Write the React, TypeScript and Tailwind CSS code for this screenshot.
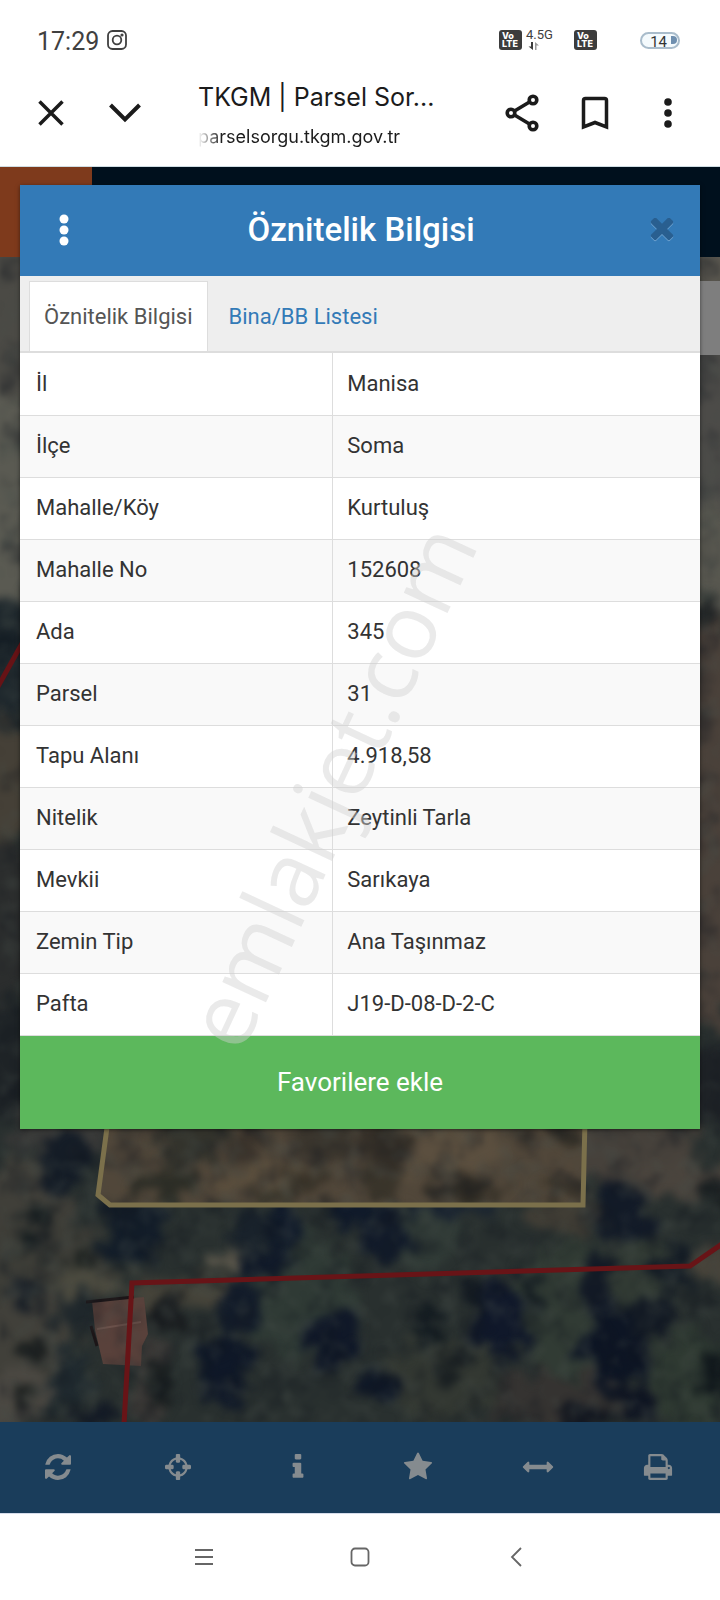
import { useState } from 'react';

const rows = [
    { label: 'İl', value: 'Manisa' },
    { label: 'İlçe', value: 'Soma' },
    { label: 'Mahalle/Köy', value: 'Kurtuluş' },
    { label: 'Mahalle No', value: '152608' },
    { label: 'Ada', value: '345' },
    { label: 'Parsel', value: '31' },
    { label: 'Tapu Alanı', value: '4.918,58' },
    { label: 'Nitelik', value: 'Zeytinli Tarla' },
    { label: 'Mevkii', value: 'Sarıkaya' },
    { label: 'Zemin Tip', value: 'Ana Taşınmaz' },
    { label: 'Pafta', value: 'J19-D-08-D-2-C' },
];

const tools = [
    { name: 'Yenile', box: '0 0 1536 1536', path: 'M1511 928q0 5-1 7-64 268-268 434.5t-478 166.5q-146 0-282.5-55t-243.5-157l-129 129q-19 19-45 19t-45-19-19-45v-448q0-26 19-45t45-19h448q26 0 45 19t19 45-19 45l-137 137q71 66 161 102t187 36q134 0 250-65t186-179q11-17 53-117 8-23 30-23h192q13 0 22.5 9.5t9.5 22.5zm25-800v448q0 26-19 45t-45 19h-448q-26 0-45-19t-19-45 19-45l138-138q-148-137-349-137-134 0-250 65t-186 179q-11 17-53 117-8 23-30 23h-199q-13 0-22.5-9.5t-9.5-22.5v-7q65-268 270-434.5t480-166.5q146 0 284 55.5t245 156.5l130-129q19-19 45-19t45 19 19 45z' },
    { name: 'Konum', box: '128 128 1536 1536', path: 'M1325 1024h-109q-26 0-45-19t-19-45v-128q0-26 19-45t45-19h109q-32-108-112.5-188.5t-188.5-112.5v109q0 26-19 45t-45 19h-128q-26 0-45-19t-19-45v-109q-108 32-188.5 112.5t-112.5 188.5h109q26 0 45 19t19 45v128q0 26-19 45t-45 19h-109q32 108 112.5 188.5t188.5 112.5v-109q0-26 19-45t45-19h128q26 0 45 19t19 45v109q108-32 188.5-112.5t112.5-188.5zm339-192v128q0 26-19 45t-45 19h-143q-37 161-154.5 278.5t-278.5 154.5v143q0 26-19 45t-45 19h-128q-26 0-45-19t-19-45v-143q-161-37-278.5-154.5t-154.5-278.5h-143q-26 0-45-19t-19-45v-128q0-26 19-45t45-19h143q37-161 154.5-278.5t278.5-154.5v-143q0-26 19-45t45-19h128q26 0 45 19t19 45v143q161 37 278.5 154.5t154.5 278.5h143q26 0 45 19t19 45z' },
    { name: 'Bilgi', box: '128 128 1536 1536', path: 'M1216 1344v128q0 26-19 45t-45 19h-512q-26 0-45-19t-19-45v-128q0-26 19-45t45-19h64v-384h-64q-26 0-45-19t-19-45v-128q0-26 19-45t45-19h384q26 0 45 19t19 45v576h64q26 0 45 19t19 45zm-128-1152v192q0 26-19 45t-45 19h-256q-26 0-45-19t-19-45v-192q0-26 19-45t45-19h256q26 0 45 19t19 45z' },
    { name: 'Favoriler', box: '128 128 1536 1536', path: 'M1728 647q0 22-26 48l-363 354 86 500q1 7 1 20 0 21-10.5 35.5t-30.5 14.5q-19 0-40-12l-449-236-449 236q-22 12-40 12-21 0-31.5-14.5t-10.5-35.5q0-6 2-20l86-500-364-354q-25-27-25-48 0-37 56-46l502-73 225-455q19-41 49-41t49 41l225 455 502 73q56 9 56 46z' },
    { name: 'Ölçüm', box: '128 128 1536 1536', path: 'M1792 896q0 26-19 45l-256 256q-19 19-45 19t-45-19-19-45v-128h-1024v128q0 26-19 45t-45 19-45-19l-256-256q-19-19-19-45t19-45l256-256q19-19 45-19t45 19 19 45v128h1024v-128q0-26 19-45t45-19 45 19l256 256q19 19 19 45z' },
    { name: 'Yazdır', box: '128 128 1536 1536', path: 'M448 1536h896v-256h-896v256zm0-640h896v-384h-160q-40 0-68-28t-28-68v-160h-640v640zm1152 64q0-26-19-45t-45-19-45 19-19 45 19 45 45 19 45-19 19-45zm128 0v416q0 13-9.5 22.5t-22.5 9.5h-224v160q0 40-28 68t-68 28h-960q-40 0-68-28t-28-68v-160h-224q-13 0-22.5-9.5t-9.5-22.5v-416q0-79 56.5-135.5t135.5-56.5h64v-544q0-40 28-68t68-28h672q40 0 88 20t76 48l152 152q28 28 48 76t20 88v256h64q79 0 135.5 56.5t56.5 135.5z' },
];

// [cx, cy, rx, ry, color]
type Blob = [number, number, number, number, string];

const ground: Blob[] = [
    [0, 340, 60, 120, '#4b4a45'],
    [0, 500, 60, 110, '#5a5a52'],
    [0, 660, 50, 60, '#1f282d'],
    [0, 780, 50, 60, '#454037'],
    [0, 920, 50, 80, '#2b2d2d'],
    [0, 1060, 50, 60, '#1f2427'],
    [715, 250, 60, 40, '#5a574f'],
    [715, 430, 60, 140, '#4c4b48'],
    [715, 560, 40, 50, '#595850'],
    [712, 820, 50, 210, '#4a413a'],
    [715, 1090, 40, 40, '#1e2226'],
    [60, 1130, 50, 30, '#383837'],
    [25, 1210, 50, 50, '#403f39'],
    [40, 1270, 70, 50, '#3d3d37'],
    [20, 1340, 55, 45, '#41403a'],
    [15, 1400, 40, 28, '#4b4842'],
    [90, 1285, 35, 14, '#4b4a3f'],
    [620, 1150, 80, 35, '#46413b'],
    [575, 1215, 45, 20, '#403d35'],
    [680, 1180, 50, 20, '#4a443d'],
    [715, 1265, 20, 20, '#47433a'],
    [225, 1262, 16, 14, '#5c584c'],
    [185, 1292, 55, 14, '#46443a'],
    [150, 1380, 16, 50, '#3e3b38'],
    [560, 1400, 90, 28, '#353331'],
    [440, 1380, 60, 40, '#333832'],
    [300, 1300, 60, 60, '#2f3a35'],
    [570, 1310, 60, 70, '#313b34'],
    [420, 1230, 40, 40, '#303a36'],
    [640, 1290, 30, 50, '#323b34'],
    [690, 1380, 40, 50, '#2f3a32'],
];

const trees: Blob[] = [
    [65, 1160, 24, 34, '#151d27'],
    [35, 1217, 14, 14, '#191f21'],
    [32, 1250, 14, 10, '#1c2323'],
    [78, 1256, 13, 16, '#1c211f'],
    [24, 1290, 18, 14, '#1b2128'],
    [34, 1352, 12, 14, '#1b1f1d'],
    [25, 1394, 12, 9, '#1c1f1e'],
    [75, 1310, 20, 20, '#20282c'],
    [135, 1230, 32, 36, '#131d29'],
    [70, 1380, 24, 24, '#202a2f'],
    [95, 1415, 24, 10, '#141b26'],
    [250, 1230, 22, 22, '#19222b'],
    [285, 1225, 16, 30, '#101a2a'],
    [265, 1262, 26, 14, '#111a29'],
    [350, 1205, 18, 22, '#101a2a'],
    [385, 1235, 24, 28, '#121b2a'],
    [170, 1315, 20, 16, '#171a1d'],
    [240, 1310, 22, 24, '#131c2a'],
    [225, 1370, 26, 36, '#0f1828'],
    [330, 1340, 28, 28, '#101828'],
    [160, 1385, 12, 22, '#1a1f20'],
    [430, 1325, 16, 20, '#11191f'],
    [500, 1320, 28, 38, '#10182a'],
    [380, 1385, 22, 14, '#0f1828'],
    [455, 1370, 20, 12, '#171d20'],
    [535, 1290, 10, 18, '#121a20'],
    [470, 1290, 12, 18, '#141b22'],
    [625, 1210, 30, 30, '#131b28'],
    [600, 1290, 14, 34, '#131a26'],
    [615, 1350, 34, 40, '#0d1524'],
    [650, 1315, 26, 20, '#131a24'],
    [632, 1400, 16, 18, '#0f1522'],
    [675, 1270, 18, 22, '#141c25'],
    [715, 1190, 16, 12, '#1a1f21'],
    [714, 1370, 10, 24, '#11181c'],
    [450, 1200, 50, 16, '#1a2430'],
    [590, 1417, 30, 8, '#11151f'],
    [2, 645, 16, 14, '#141d24'],
    [704, 618, 10, 9, '#222425'],
];

const fieldTrees: Blob[] = [
    [165, 1182, 32, 18, '#2c2d26'],
    [190, 1140, 32, 26, '#33332c'],
    [245, 1140, 18, 26, '#3a332b'],
    [310, 1180, 20, 16, '#383228'],
    [325, 1138, 30, 24, '#3a352d'],
    [385, 1145, 26, 22, '#332e27'],
    [380, 1185, 20, 16, '#39342a'],
    [465, 1192, 36, 12, '#302c24'],
    [515, 1130, 18, 10, '#3b352c'],
    [565, 1134, 18, 12, '#353128'],
    [560, 1190, 26, 10, '#3f382c'],
    [275, 1196, 20, 7, '#38342a'],
];

function Blobs({ items }: { items: Blob[] }) {
    return (
        <>
            {items.map(([cx, cy, rx, ry, fill], i) => (
                <ellipse key={i} cx={cx} cy={cy} rx={rx} ry={ry} fill={fill} />
            ))}
        </>
    );
}

function SatelliteMap() {
    return (
        <svg className="w-full flex-1 min-h-0" viewBox="0 257 720 1165" preserveAspectRatio="xMidYMin slice" aria-hidden="true">
            <defs>
                <filter id="soft" x="-10%" y="-10%" width="120%" height="120%" colorInterpolationFilters="sRGB">
                    <feTurbulence type="fractalNoise" baseFrequency="0.05" numOctaves="3" seed="4" result="n" />
                    <feDisplacementMap in="SourceGraphic" in2="n" scale="50" xChannelSelector="R" yChannelSelector="G" />
                    <feGaussianBlur stdDeviation="4" />
                </filter>
                <filter id="shadeNoise" x="0" y="0" width="100%" height="100%" colorInterpolationFilters="sRGB">
                    <feTurbulence type="fractalNoise" baseFrequency="0.035" numOctaves="3" seed="11" />
                    <feColorMatrix values="0 0 0 0 0.06  0 0 0 0 0.08  0 0 0 0 0.11  3 0 0 0 -1.4" />
                    <feGaussianBlur stdDeviation="2" />
                </filter>
                <filter id="lightNoise" x="0" y="0" width="100%" height="100%" colorInterpolationFilters="sRGB">
                    <feTurbulence type="fractalNoise" baseFrequency="0.05" numOctaves="3" seed="23" />
                    <feColorMatrix values="0 0 0 0 0.28  0 0 0 0 0.31  0 0 0 0 0.29  0 2.4 0 0 -1.1" />
                    <feGaussianBlur stdDeviation="2" />
                </filter>
                <clipPath id="parcel">
                    <path d="M108 1100 97 1196l12 9h475l4-105z" />
                </clipPath>
            </defs>
            <rect y="257" width="720" height="1165" fill="#29302f" />
            <g filter="url(#soft)">
                <Blobs items={ground} />
                <Blobs items={trees} />
            </g>
            <g clipPath="url(#parcel)">
                <rect x="90" y="1100" width="500" height="110" fill="#51473a" />
                <g filter="url(#soft)">
                    <ellipse cx="440" cy="1150" rx="60" ry="30" fill="#5b4f3f" />
                    <ellipse cx="270" cy="1180" rx="60" ry="14" fill="#5a4e3d" />
                    <Blobs items={fieldTrees} />
                </g>
            </g>
            <path d="M92 1301 144 1297l4 37-6 12-1 20-38-2-8-34z" fill="#59413b" />
            <path d="M97 1329 141 1322" stroke="#6d524b" strokeWidth="2" />
            <path d="M86 1302 134 1297M91 1326l6 20" stroke="#1c1517" strokeWidth="3" />
            <rect y="257" width="720" height="1165" filter="url(#shadeNoise)" opacity=".35" />
            <rect y="257" width="720" height="1165" filter="url(#lightNoise)" opacity=".35" />
            <path d="M108 1120 98 1195l12 10h473l2-85" fill="none" stroke="#7b704b" strokeWidth="5" />
            <path d="M-4 690 24 640" stroke="#661316" strokeWidth="5" />
            <path d="M124 1424 132 1283 690 1266 722 1244" fill="none" stroke="#681417" strokeWidth="5" />
            <rect x="690" y="281" width="30" height="74" fill="#7e7e7e" />
        </svg>
    );
}

function VolteBadge() {
    return (
        <span className="flex h-5 w-[23px] flex-col justify-center rounded-[3px] bg-[#3c3c3c] pl-[3px] font-['Inter',sans-serif] text-[9px] leading-[8px] font-extrabold text-white">
            <span>Vo</span>
            <span>LTE</span>
        </span>
    );
}

function StatusBar() {
    return (
        <div className="flex h-[80px] items-center pl-[37px] pr-10 text-[#404040]">
            <span className="font-['Roboto',sans-serif] text-[25px] leading-8 pt-1">17:29</span>
            <svg className="ml-2 size-5" viewBox="0 0 20 20" fill="none" stroke="currentColor" strokeWidth="1.8" aria-label="Instagram">
                <rect x="1" y="1" width="18" height="18" rx="4.5" />
                <circle cx="10" cy="10" r="4.3" />
                <circle cx="15" cy="5" r=".7" fill="currentColor" />
            </svg>
            <div className="ml-auto flex items-center">
                <VolteBadge />
                <span className="ml-1 flex w-7 flex-col text-[13px] leading-3">
                    4.5G
                    <svg className="ml-0.5 h-2.5 w-3" viewBox="0 0 12 10" aria-hidden="true">
                        <path d="M5 1v8L.5 5.5H3V1z" fill="#3c3c3c" />
                        <path d="M7 9V1l4 3.500H8.500V9z" fill="#9a9a9a" />
                    </svg>
                </span>
                <span className="ml-5">
                    <VolteBadge />
                </span>
                <span className="ml-[43px] flex h-[17px] w-10 items-center justify-end gap-1 rounded-full border-2 border-[#a9bccb] bg-[#f4fafd] pr-px">
                    <span className="text-[15px] leading-4 pt-1 text-[#333]">14</span>
                    <span className="h-2 w-1.5 rounded-r-full bg-[#6f8faf]" />
                </span>
            </div>
        </div>
    );
}

function BrowserBar() {
    return (
        <header className="flex h-[87px] items-start border-b border-[#cfdde3] text-[#1b1b1b]">
            <button aria-label="Kapat" className="mt-[9px] ml-[27px] flex size-12 items-center justify-center">
                <svg className="size-7" viewBox="0 0 28 28" fill="none" stroke="currentColor" strokeWidth="3.5">
                    <path d="M2.500 2.500 25.500 25.500M25.500 2.500 2.500 25.500" />
                </svg>
            </button>
            <button aria-label="Küçült" className="mt-[9px] ml-[26px] flex size-12 items-center justify-center">
                <svg className="h-5 w-8" viewBox="0 0 32 20" fill="none" stroke="currentColor" strokeWidth="4">
                    <path d="M1.500 2 16 16.500 30.500 2" />
                </svg>
            </button>
            <div className="ml-[49px] min-w-0 flex-1 font-['Inter',sans-serif]">
                <div className="text-[25px] leading-[34px] whitespace-nowrap">TKGM | Parsel Sor...</div>
                <span className="mt-[9px] inline-block text-[18px] leading-7 [mask-image:linear-gradient(to_right,transparent,black_24px)]">
                    parselsorgu.tkgm.gov.tr
                </span>
            </div>
            <div className="mt-[9px] mr-7 flex gap-[25px]">
                <button aria-label="Paylaş" className="flex size-12 items-center justify-center">
                    <svg className="h-[38px] w-[34px]" viewBox="0 0 34 38" fill="none" stroke="currentColor" strokeWidth="3.6">
                        <circle cx="6" cy="19" r="3.8" />
                        <circle cx="28" cy="6" r="3.8" />
                        <circle cx="28" cy="32" r="3.8" />
                        <path d="M9.500 17 24.500 8M9.500 21 24.500 30" />
                    </svg>
                </button>
                <button aria-label="Yer işareti" className="flex size-12 items-center justify-center">
                    <svg className="h-[34px] w-7" viewBox="0 0 28 34" fill="none" stroke="currentColor" strokeWidth="3.5">
                        <path d="M2.500 31V4.500q0-2 2-2h19q2 0 2 2V31L14 26.500z" />
                    </svg>
                </button>
                <button aria-label="Diğer" className="flex size-12 items-center justify-center">
                    <svg className="h-8 w-2" viewBox="0 0 8 32" fill="currentColor">
                        <circle cx="4" cy="5" r="3.8" />
                        <circle cx="4" cy="16" r="3.8" />
                        <circle cx="4" cy="27" r="3.8" />
                    </svg>
                </button>
            </div>
        </header>
    );
}

export default function App() {
    const [tab, setTab] = useState('info');

    const tabClass = (name: string) =>
        tab === name
            ? 'border border-b-0 border-[#ddd] bg-white px-[14px] text-[#555]'
            : 'border border-b-0 border-transparent px-5 text-[#337ab7]';

    return (
        <div className="flex min-h-screen flex-col bg-white font-['Roboto',sans-serif]">
            <StatusBar />
            <BrowserBar />

            <main className="relative flex flex-1 flex-col">
                <div className="absolute inset-x-0 top-0 bottom-[91px] flex flex-col overflow-hidden">
                    <div className="flex h-[90px] shrink-0 bg-[#00101d]">
                        <div className="w-[92px] bg-[#7e3a1c]" />
                    </div>
                    <SatelliteMap />
                </div>

                <section className="relative mx-5 mt-[18px] mb-auto bg-white shadow-[0_1px_4px_rgba(0,0,0,0.5)]">
                    <div className="flex h-[91px] items-center justify-between bg-[#337ab7] pr-2.5 pb-0.5 pl-5">
                        <button aria-label="Menü" className="flex size-12 items-center justify-center text-white">
                            <svg className="h-8 w-2.5" viewBox="0 0 10 32" fill="currentColor">
                                <circle cx="5" cy="5" r="4.500" />
                                <circle cx="5" cy="16" r="4.500" />
                                <circle cx="5" cy="27" r="4.500" />
                            </svg>
                        </button>
                        <h1 className="text-[33px] leading-10 font-medium text-white">Öznitelik Bilgisi</h1>
                        <button aria-label="Kapat" className="flex h-12 w-14 items-center justify-center text-[#295f90]">
                            <svg className="size-6 drop-shadow-[0_1px_0_#6fa3d0]" viewBox="260 380 1272 1272" fill="currentColor">
                                <path d="M1490 1322q0 40-28 68l-136 136q-28 28-68 28t-68-28l-294-294-294 294q-28 28-68 28t-68-28l-136-136q-28-28-28-68t28-68l294-294-294-294q-28-28-28-68t28-68l136-136q28-28 68-28t68 28l294 294 294-294q28-28 68-28t68 28l136 136q28 28 28 68t-28 68l-294 294 294 294q28 28 28 68z" />
                            </svg>
                        </button>
                    </div>

                    <div className="flex h-[77px] items-end border-b-2 border-[#ddd] bg-[#eee] px-[9px] text-[22px]">
                        <button onClick={() => setTab('info')} className={`h-[70px] ${tabClass('info')}`}>
                            Öznitelik Bilgisi
                        </button>
                        <button onClick={() => setTab('list')} className={`h-[70px] ${tabClass('list')}`}>
                            Bina/BB Listesi
                        </button>
                    </div>

                    <table className="w-full table-fixed border-collapse text-[22px] leading-[30px] text-[#333]">
                        <colgroup>
                            <col className="w-[46%]" />
                            <col />
                        </colgroup>
                        <tbody>
                            {rows.map((row) => (
                                <tr key={row.label} className="h-[62px] border-b border-[#ddd] even:bg-[#f9f9f9]">
                                    <th scope="row" className="border-r border-[#ddd] px-4 text-left font-normal">{row.label}</th>
                                    <td className="px-[14px]">{row.value}</td>
                                </tr>
                            ))}
                        </tbody>
                    </table>

                    <button className="h-[93px] w-full bg-[#5cb85c] text-[26px] text-white">Favorilere ekle</button>

                    <div className="pointer-events-none absolute inset-0 flex items-center justify-center" aria-hidden="true">
                        <span className="relative top-[128px] right-[31px] -rotate-65 font-['Open_Sans',sans-serif] text-[90px] leading-none text-[#d1d1d1]/45">
                            emlakjet.com
                        </span>
                    </div>
                </section>

                <nav className="relative flex h-[91px] items-center bg-[#1a3d5b] text-[#858b8f]">
                    {tools.map((tool) => (
                        <button key={tool.name} aria-label={tool.name} className="flex h-full flex-1 items-center justify-center pr-1 pb-0.5">
                            <svg className="size-[26px] overflow-visible" viewBox={tool.box} fill="currentColor">
                                <path d={tool.path} />
                            </svg>
                        </button>
                    ))}
                </nav>
            </main>

            <footer className="flex h-[87px] items-center justify-center gap-[108px] border-t border-[#d5dcea] text-[#666]">
                <button aria-label="Son uygulamalar" className="flex size-12 items-center justify-center">
                    <svg className="size-[18px]" viewBox="0 0 18 18" fill="none" stroke="currentColor" strokeWidth="1.8">
                        <path d="M0 2h18M0 9h18M0 16h18" />
                    </svg>
                </button>
                <button aria-label="Ana ekran" className="flex size-12 items-center justify-center">
                    <svg className="size-5" viewBox="0 0 20 20" fill="none" stroke="currentColor" strokeWidth="1.8">
                        <rect x="1.500" y="1.500" width="17" height="17" rx="3.500" />
                    </svg>
                </button>
                <button aria-label="Geri" className="flex size-12 items-center justify-center">
                    <svg className="size-5" viewBox="0 0 20 20" fill="none" stroke="currentColor" strokeWidth="1.8">
                        <path d="M15 1 6 10l9 9" />
                    </svg>
                </button>
            </footer>
        </div>
    );
}
